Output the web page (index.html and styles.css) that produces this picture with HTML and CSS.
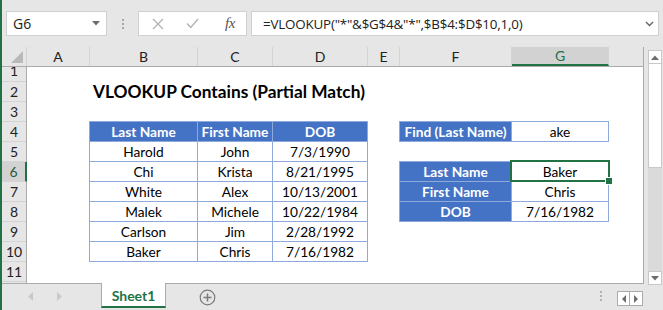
FILE: index.html
```html
<!DOCTYPE html>
<html>
<head>
<meta charset="utf-8">
<link rel="stylesheet" href="styles.css">
</head>
<body>
<div class="app">
  <div class="fbar">
    <div class="namebox"><span>G6</span><svg class="caret" width="8" height="5" viewBox="0 0 8 5"><path d="M0 0H8L4 4.5Z" fill="#6d6d6d"/></svg></div>
    <div class="dots"><i></i><i></i><i></i></div>
    <div class="fbtns">
      <svg class="ico-x" width="12" height="12" viewBox="0 0 12 12"><path d="M1 1L11 11M11 1L1 11" stroke="#b4b4b4" stroke-width="1.4" fill="none"/></svg>
      <svg class="ico-ok" width="13" height="11" viewBox="0 0 13 11"><path d="M1 5.5L4.8 9.5L12 1" stroke="#b4b4b4" stroke-width="1.5" fill="none"/></svg>
      <span class="fx">fx</span>
    </div>
    <div class="finput"><span>=VLOOKUP("*"&amp;$G$4&amp;"*",$B$4:$D$10,1,0)</span><svg width="9" height="6" viewBox="0 0 9 6"><path d="M1 1L4.5 4.5L8 1" stroke="#666" stroke-width="1.4" fill="none"/></svg></div>
  </div>

  <div class="main">
    <div class="sheet">
      <div class="colhdr">
        <div class="corner"><svg width="14" height="14" viewBox="0 0 14 14"><path d="M13 1V13H1Z" fill="#b9b9b9"/></svg></div>
        <div class="ch w-a">A</div>
        <div class="ch w-b">B</div>
        <div class="ch w-c">C</div>
        <div class="ch w-d">D</div>
        <div class="ch w-e">E</div>
        <div class="ch w-f">F</div>
        <div class="ch w-g sel">G</div>
        <div class="ch w-h last"></div>
      </div>
      <div class="body">
        <div class="rowhdr">
          <div class="rh r1"><span>1</span></div>
          <div class="rh">2</div>
          <div class="rh">3</div>
          <div class="rh">4</div>
          <div class="rh">5</div>
          <div class="rh sel">6</div>
          <div class="rh">7</div>
          <div class="rh">8</div>
          <div class="rh">9</div>
          <div class="rh">10</div>
          <div class="rh">11</div>
        </div>
        <div class="cells">
          <div class="title">VLOOKUP Contains (Partial Match)</div>

          <div class="tbl t1">
            <div class="th">Last Name</div><div class="th">First Name</div><div class="th">DOB</div>
            <div class="td">Harold</div><div class="td">John</div><div class="td">7/3/1990</div>
            <div class="td">Chi</div><div class="td">Krista</div><div class="td">8/21/1995</div>
            <div class="td">White</div><div class="td">Alex</div><div class="td">10/13/2001</div>
            <div class="td">Malek</div><div class="td">Michele</div><div class="td">10/22/1984</div>
            <div class="td">Carlson</div><div class="td">Jim</div><div class="td">2/28/1992</div>
            <div class="td">Baker</div><div class="td">Chris</div><div class="td">7/16/1982</div>
          </div>

          <div class="tbl t2 find">
            <div class="th">Find (Last Name)</div><div class="td">ake</div>
          </div>

          <div class="tbl t2 res">
            <div class="th">Last Name</div><div class="td active">Baker</div>
            <div class="th">First Name</div><div class="td">Chris</div>
            <div class="th">DOB</div><div class="td">7/16/1982</div>
          </div>
        </div>
      </div>
    </div>
    <div class="vscroll">
      <div class="sbtn up"><svg width="8" height="5" viewBox="0 0 8 5"><path d="M0 5H8L4 0.5Z" fill="#6d6d6d"/></svg></div>
      <div class="thumb"></div>
      <div class="track"></div>
      <div class="sbtn down"><svg width="8" height="5" viewBox="0 0 8 5"><path d="M0 0H8L4 4.5Z" fill="#6d6d6d"/></svg></div>
    </div>
  </div>

  <div class="tabbar">
    <div class="navl">
      <svg width="5" height="9" viewBox="0 0 5 9"><path d="M5 0V9L0 4.5Z" fill="#c9c9c9"/></svg>
      <svg width="5" height="9" viewBox="0 0 5 9"><path d="M0 0V9L5 4.5Z" fill="#c9c9c9"/></svg>
    </div>
    <div class="tab">Sheet1</div>
    <div class="plus"><svg width="17" height="17" viewBox="0 0 17 17"><circle cx="8.5" cy="8.5" r="7.3" stroke="#7a7a7a" stroke-width="1.2" fill="none"/><path d="M8.5 4.5V12.5M4.5 8.5H12.5" stroke="#7a7a7a" stroke-width="1.5"/></svg></div>
    <div class="tdots"><i></i><i></i><i></i></div>
    <div class="navbox">
      <div class="nb"><svg width="4" height="8" viewBox="0 0 4 8"><path d="M4 0V8L0 4Z" fill="#6d6d6d"/></svg></div>
      <div class="nb"><svg width="4" height="8" viewBox="0 0 4 8"><path d="M0 0V8L4 4Z" fill="#6d6d6d"/></svg></div>
    </div>
  </div>
</div>
</body>
</html>
```

FILE: styles.css
```css
* { box-sizing: border-box; }
body { margin: 0; background: #e6e6e6; font-family: Lato, "Noto Sans", sans-serif; }

.app {
  width: 663px; height: 310px; overflow: hidden;
  border-left: 2px solid #217346;
  background: #e6e6e6;
  display: flex; flex-direction: column;
}

/* formula bar */
.fbar { height: 47px; flex: none; display: flex; align-items: flex-start; padding: 11px 0 0 4px; }
.namebox {
  width: 101px; height: 25px; background: #fff; border: 1px solid #d0d0d0;
  display: flex; align-items: center; justify-content: space-between;
  padding: 0 6px 0 6px; font: 14px "Open Sans", sans-serif; color: #222;
}
.dots { width: 31px; height: 25px; display: flex; flex-direction: column; align-items: center; justify-content: center; gap: 2px; }
.dots i { display: block; width: 2px; height: 2px; background: #a8a8a8; }
.fbtns {
  width: 109px; height: 25px; background: #fff; border: 1px solid #d0d0d0;
  display: flex; align-items: center; padding-left: 13px;
}
.ico-ok { margin-left: 22px; }
.fx { margin-left: 26px; font: italic 15px "Liberation Serif", serif; color: #555; letter-spacing: -0.5px; }
.finput {
  width: 408px; margin-left: 4px; height: 25px; background: #fff; border: 1px solid #d0d0d0;
  display: flex; align-items: center; justify-content: space-between;
  padding: 0 4px 0 11px; font: 13.4px "Open Sans", sans-serif; color: #222; letter-spacing: -0.2px;
}

/* sheet */
.main { height: 237px; flex: none; display: flex; }
.sheet { width: 642px; flex: none; border-right: 1px solid #ababab; border-bottom: 1px solid #ababab; display: flex; flex-direction: column; }
.colhdr { height: 20px; flex: none; display: flex; border-bottom: 1px solid #ababab; }
.corner { width: 25px; flex: none; display: flex; align-items: flex-end; justify-content: flex-end; padding: 0 2px 2px 0; border-right: 1px solid #d4d4d4; }
.ch {
  flex: none; border-right: 1px solid #d4d4d4; text-align: center;
  font-size: 14px; line-height: 19px; color: #222;
}
.ch.last { border-right: none; }
.ch.sel { background: #d2d2d2; color: #217346; border-bottom: 2px solid #217346; line-height: 17px; }
.w-a { width: 63px; } .w-b { width: 108px; } .w-c { width: 75px; } .w-d { width: 95px; }
.w-e { width: 32px; } .w-f { width: 112px; } .w-g { width: 97px; } .w-h { width: 34px; }

.body { flex: 1; display: flex; }
.rowhdr { width: 25px; flex: none; border-right: 1px solid #ababab; display: flex; flex-direction: column; }
.rh {
  height: 20px; flex: none; border-bottom: 1px solid #d4d4d4; text-align: center;
  font-size: 14px; line-height: 19px; color: #222;
}
.rh.r1 { height: 15px; overflow: hidden; }
.rh.r1 span { display: block; margin-top: -6px; }
.rh.sel { background: #d2d2d2; margin-right: -1px; border-right: 2px solid #217346; color: #1e5e3a; }

.cells {
  flex: 1; background: #fff;
  display: grid;
  grid-template-columns: 63px 108px 75px 95px 32px 112px 97px 34px;
  grid-template-rows: 15px repeat(10, 20px);
  align-items: start; justify-items: start;
}
.title {
  grid-row: 2; grid-column: 2 / span 6; padding-left: 3px;
  font-weight: 700; font-size: 17.3px; line-height: 20px; color: #000; white-space: nowrap;
}
.tbl {
  display: grid; gap: 1px; padding: 1px; background: #8eaadb;
  margin: -1px 0 0 -1px; grid-auto-rows: 19px;
}
.t1 { grid-row: 4 / span 7; grid-column: 2 / span 3; grid-template-columns: 107px 74px 94px; }
.t2 { grid-column: 6 / span 2; grid-template-columns: 111px 96px; }
.find { grid-row: 4; }
.res { grid-row: 6 / span 3; }
.th, .td { text-align: center; font-size: 13.7px; line-height: 19px; white-space: nowrap; }
.th { background: #4472c4; color: #fff; font-weight: 700; }
.td { background: #fff; color: #000; }
.td.active { position: relative; }
.td.active::after {
  content: ""; position: absolute; left: -2px; top: -2px; right: -2px; bottom: -1px;
  border: 2px solid #217346;
}
.td.active::before {
  content: ""; position: absolute; right: -5px; bottom: -4px; width: 6px; height: 6px;
  background: #217346; border: 1px solid #fff; z-index: 2;
}

/* vertical scrollbar */
.vscroll { flex: 1; display: flex; flex-direction: column; padding: 3px 1px 0 4px; }
.sbtn { height: 14px; flex: none; background: #fff; border: 1px solid #c8c8c8; display: flex; align-items: center; justify-content: center; }
.thumb { height: 104px; flex: none; background: #fff; border: 1px solid #c8c8c8; border-top: none; }
.track { flex: 1; background: #dadada; }
.sbtn.down { margin-bottom: -1px; }

/* tabs */
.tabbar { flex: 1; display: flex; align-items: flex-start; }
.navl { width: 99px; height: 25px; display: flex; align-items: center; gap: 24px; padding-left: 26px; }
.tab {
  width: 65px; height: 25px; margin-top: -1px; background: #fff;
  border-left: 1px solid #ababab; border-right: 1px solid #ababab; border-bottom: 2px solid #217346;
  text-align: center; font-weight: 700; font-size: 14px; line-height: 25px; color: #217346;
}
.plus { margin: 5px 0 0 33px; display: flex; }
.tdots { margin: 7px 0 0 auto; display: flex; flex-direction: column; gap: 2px; }
.tdots i { display: block; width: 2px; height: 2px; background: #b0b0b0; }
.navbox { margin: 7px 20px 0 15px; display: flex; }
.nb { width: 13px; height: 15px; background: #fff; border: 1px solid #ababab; display: flex; align-items: center; justify-content: center; }
.nb + .nb { border-left: 1px solid #ababab; margin-left: -1px; width: 14px; }
```
